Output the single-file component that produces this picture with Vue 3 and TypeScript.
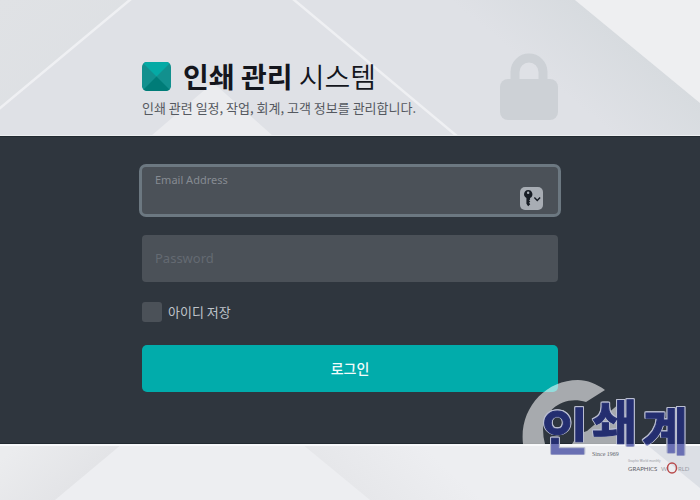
<script setup lang="ts">
import { ref } from 'vue'

const email = ref('')
const password = ref('')
const remember = ref(false)
</script>

<template>
  <div class="page">
    <header class="masthead">
      <svg class="backdrop" viewBox="0 0 700 136" preserveAspectRatio="none" aria-hidden="true">
        <defs>
          <linearGradient id="fold" gradientUnits="userSpaceOnUse" x1="638" y1="52" x2="588" y2="113">
            <stop offset="0" stop-color="#d7dbdf" />
            <stop offset="1" stop-color="#dfe1e6" />
          </linearGradient>
          <linearGradient id="shade" x1="0" y1="0" x2="1" y2="1">
            <stop offset="0" stop-color="#e0e2e5" />
            <stop offset="1" stop-color="#dcdfe3" />
          </linearGradient>
        </defs>
        <rect width="700" height="136" fill="#dfe1e6" />
        <path d="M0 0H131L0 108Z" fill="url(#shade)" />
        <path d="M380 0H575L700 103V136H380Z" fill="url(#fold)" />
        <path d="M575 0H700V103Z" fill="#eeeff1" />
        <path d="M151 136L208 87Q213 83 218 87L273 136Z" fill="#ebecef" />
        <path d="M131 -1L-1 109M293 -1L458 137" fill="none" stroke="#eff0f3" stroke-width="2.5" />
        <rect y="135" width="700" height="1" fill="#eceef0" />
      </svg>
      <div class="column heading">
        <div>
          <h1 class="brand">
            <svg class="gem" viewBox="0 0 30 30" aria-hidden="true">
              <defs>
                <clipPath id="gemClip"><rect width="30" height="30" rx="5" /></clipPath>
              </defs>
              <g clip-path="url(#gemClip)">
                <rect width="30" height="30" fill="#12908e" />
                <path d="M0 0H30L15 15Z" fill="#05aaa5" />
                <path d="M0 30H30L15 15Z" fill="#007c78" />
              </g>
            </svg>
            <span class="title"><strong>인쇄 관리</strong> 시스템</span>
          </h1>
          <p class="tagline">인쇄 관련 일정, 작업, 회계, 고객 정보를 관리합니다.</p>
        </div>
        <svg class="lock" viewBox="0 0 58 68" aria-hidden="true">
          <path d="M15 30V19a14 14 0 0 1 28 0V30" fill="none" stroke="#cdd1d6" stroke-width="9" />
          <rect y="26" width="58" height="41" rx="8" fill="#cdd1d6" />
        </svg>
      </div>
    </header>

    <main class="panel">
      <form class="column form" @submit.prevent>
        <div class="field email">
          <label for="email">Email Address</label>
          <input id="email" v-model="email" type="email" />
          <button class="keys" type="button" aria-label="Passwords">
            <svg viewBox="0 0 24 24" aria-hidden="true">
              <path
                d="M8.500 3a4.500 4.500 0 0 0-1.800 8.500v6L8.500 20l2.200-2-1.200-1.500 1.200-1.300-1.200-1.200 1-1v-1.500A4.500 4.500 0 0 0 8.500 3Zm0 1.600a1.300 1.300 0 1 1 0 2.600 1.300 1.300 0 0 1 0-2.600Z"
                fill="#171c24"
                fill-rule="evenodd"
              />
              <path d="M15 11l3 3 3-3" fill="none" stroke="#171c24" stroke-width="1.500" />
            </svg>
          </button>
        </div>
        <input
          v-model="password"
          class="field password"
          type="password"
          placeholder="Password"
          aria-label="Password"
        />
        <label class="remember">
          <input v-model="remember" type="checkbox" />
          <span>아이디 저장</span>
        </label>
        <button class="login" type="submit">로그인</button>
      </form>
    </main>

    <footer class="foot">
      <svg class="backdrop" viewBox="0 0 700 56" preserveAspectRatio="none" aria-hidden="true">
        <defs>
          <linearGradient id="footLeft" gradientUnits="userSpaceOnUse" x1="88" y1="28" x2="45" y2="-22">
            <stop offset="0" stop-color="#e3e4e7" />
            <stop offset="1" stop-color="#ebecee" />
          </linearGradient>
          <linearGradient id="footMid" gradientUnits="userSpaceOnUse" x1="336" y1="28" x2="390" y2="-30">
            <stop offset="0" stop-color="#e6e7ea" />
            <stop offset="1" stop-color="#edeef1" />
          </linearGradient>
        </defs>
        <rect width="700" height="56" fill="#edeef1" />
        <path d="M0 0H122L55 56H0Z" fill="url(#footLeft)" />
        <path d="M302 0H646L700 44V56H370Z" fill="url(#footMid)" />
        <path d="M646 0H700V44Z" fill="#dcdfe5" />
        <rect width="700" height="2" fill="#f8f9fb" />
      </svg>
    </footer>

    <svg class="watermark" viewBox="0 0 180 124" role="img" aria-label="인쇄계 Graphics World">
      <defs>
        <linearGradient id="ink" gradientUnits="userSpaceOnUse" x1="0" y1="0" x2="0" y2="124">
          <stop offset="0.55" stop-color="#242e70" />
          <stop offset="0.55" stop-color="#696fb3" />
        </linearGradient>
      </defs>
      <path
        d="M3 68C-1 33 25 4 58 4C67 4 77 8 85 14L66 26C44 19 24 34 23 53Q23 61 25 68ZM52 68Q58 57 67 55L100 27L107 41V68Z"
        fill="#ffffff"
        fill-opacity="0.58"
      />
      <g class="mark" fill="url(#ink)" stroke="url(#ink)">
        <text class="tall" x="22" y="74">인</text>
        <text class="mid" x="72" y="65">쇄</text>
        <text class="tall" x="122" y="74">계</text>
      </g>
      <text class="since" x="72" y="80">Since 1969</text>
      <text class="tiny" x="108" y="86">Graphic World monthly</text>
      <text class="world" x="108" y="95">GRAPHICS</text>
      <text class="world pale" x="141" y="95">W</text>
      <text class="world pale" x="158" y="95">RLD</text>
      <ellipse cx="152" cy="92" rx="4.500" ry="5" fill="none" stroke="#b84a4b" stroke-width="1.500" />
    </svg>
  </div>
</template>

<style>
body {
  margin: 0;
  background: #edeef1;
}
</style>

<style scoped>
.page {
  position: relative;
  display: flex;
  flex-direction: column;
  min-height: 100vh;
  font-family: "Noto Sans", "Noto Sans CJK KR", sans-serif;
}
.page * {
  box-sizing: border-box;
}
.masthead,
.foot {
  position: relative;
}
.backdrop {
  position: absolute;
  inset: 0;
  width: 100%;
  height: 100%;
}
.column {
  position: relative;
  width: 100%;
  max-width: 416px;
  margin: 0 auto;
}
.heading {
  display: flex;
  justify-content: space-between;
  align-items: flex-start;
  padding: 53px 0 15px;
}
.brand {
  display: flex;
  align-items: center;
  gap: 12px;
  margin: 0;
  height: 46px;
  color: #14161d;
  font-family: "Noto Sans CJK KR", sans-serif;
  font-size: 28px;
  line-height: 44px;
  font-weight: 350;
  white-space: nowrap;
}
.brand strong {
  font-weight: 700;
}
.gem {
  width: 29px;
  height: 29px;
}
.tagline {
  margin: 0;
  color: #555960;
  font-family: "Noto Sans CJK KR", sans-serif;
  font-size: 13px;
  line-height: 18px;
  height: 22px;
  white-space: nowrap;
}
.lock {
  width: 58px;
  height: 68px;
}
.panel {
  background: #2f363e;
  border-top: 1px solid #222a31;
  border-bottom: 1px solid #222a31;
  padding: 30px 0 51px;
}
.form {
  display: flex;
  flex-direction: column;
}
.field {
  width: 100%;
  border: 0;
  border-radius: 4px;
  background: #4b5158;
}
.email {
  position: relative;
  height: 47px;
  box-shadow: 0 0 0 3px #6c7881;
}
.email label {
  position: absolute;
  top: 4px;
  left: 13px;
  color: #868b92;
  font-size: 11px;
  line-height: 18px;
}
.email input {
  width: 100%;
  height: 100%;
  padding: 20px 48px 4px 13px;
  border: 0;
  outline: 0;
  background: transparent;
  color: #e3e5e8;
  font: inherit;
  font-size: 13px;
}
.keys {
  position: absolute;
  right: 15px;
  bottom: 4px;
  width: 23px;
  height: 23px;
  padding: 0;
  border: 0;
  border-radius: 5px;
  background: #a8adb4;
}
.keys svg {
  display: block;
  width: 23px;
  height: 23px;
}
.password {
  height: 47px;
  margin-top: 21px;
  padding: 0 13px 2px;
  outline: 0;
  color: #e3e5e8;
  font-family: inherit;
  font-size: 13px;
}
.password::placeholder {
  color: #646a72;
  opacity: 1;
}
.remember {
  display: flex;
  align-items: center;
  align-self: flex-start;
  gap: 6px;
  margin-top: 20px;
  color: #bfc3ca;
  font-family: "Noto Sans CJK KR", sans-serif;
  font-size: 13px;
  line-height: 20px;
}
.remember input {
  appearance: none;
  width: 20px;
  height: 20px;
  margin: 0;
  border-radius: 3px;
  background: #4b5158;
}
.remember input:checked {
  background: #01acab;
}
.login {
  height: 47px;
  margin-top: 23px;
  padding: 0 0 2px;
  border: 0;
  border-radius: 5px;
  background: #01acab;
  color: #f2fbfb;
  font-family: "Noto Sans CJK KR", sans-serif;
  font-size: 14px;
  font-weight: 500;
}
.foot {
  flex: 1;
  min-height: 56px;
}
.watermark {
  position: absolute;
  right: 0;
  bottom: 0;
  width: 180px;
  height: 124px;
}
.mark {
  font-family: "Noto Sans CJK KR", sans-serif;
  font-weight: 700;
  stroke-width: 1px;
  filter: drop-shadow(1px 0 0 #b9bdd0) drop-shadow(-1px 0 0 #b9bdd0) drop-shadow(0 -1px 0 #b9bdd0);
}
.tall {
  font-size: 50px;
}
.mid {
  font-size: 49px;
}
.since {
  font-family: "Liberation Serif", serif;
  font-size: 6px;
  fill: #62656b;
}
.tiny {
  font-size: 3px;
  fill: #95989f;
}
.world {
  font-family: Lato, sans-serif;
  font-size: 6px;
  fill: #5d6066;
}
.pale {
  fill: #9b9ea6;
}
</style>
